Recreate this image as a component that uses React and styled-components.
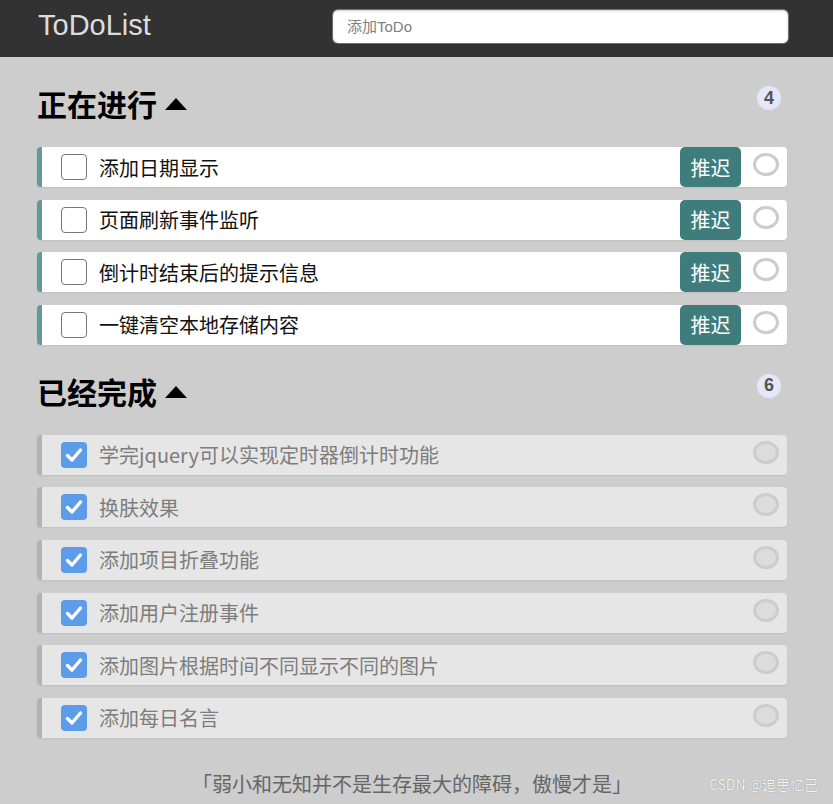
import React from "react";
import styled, { createGlobalStyle } from "styled-components";

const GlobalStyle = createGlobalStyle`
  html, body {
    margin: 0;
    padding: 0;
    background: #cdcdcd;
    font-family: "Liberation Sans", "Noto Sans CJK SC", sans-serif;
  }
`;

/* Header */
const Header = styled.header`
  height: 57px;
  background: #323232;
`;

const HeaderInner = styled.div`
  width: 750px;
  margin-left: 37px;
  height: 100%;
  display: flex;
  align-items: center;
  justify-content: space-between;
  padding-left: 1px;
`;

const Logo = styled.h1`
  margin: 0;
  font-size: 29px;
  font-weight: 400;
  color: #dddddd;
  margin-top: -7px;
`;

const AddInput = styled.input`
  width: 455px;
  height: 33px;
  box-sizing: border-box;
  margin-top: -5px;
  border: none;
  border-radius: 5px;
  padding: 0 14px;
  font-size: 15px;
  font-family: "Liberation Sans", "Noto Sans CJK SC", sans-serif;
  box-shadow: 0 1px 2px rgba(0, 0, 0, 0.2) inset, 0 0 0 1px rgba(255, 255, 255, 0.3);
  outline: none;
  &::placeholder {
    color: #808080;
  }
`;

/* Main */
const Main = styled.main`
  width: 750px;
  margin-left: 37px;
  padding-top: 28px;
`;

const SectionHead = styled.div`
  display: flex;
  align-items: center;
  justify-content: space-between;
  height: 36px;
  margin-bottom: 26px;
`;

const SectionTitle = styled.h2`
  margin: 0;
  font-size: 30px;
  font-weight: 700;
  color: #000;
  display: flex;
  align-items: center;
  gap: 8px;
  font-family: "Noto Sans CJK SC", sans-serif;
`;

const Triangle = styled.span`
  width: 0;
  height: 0;
  border-left: 11px solid transparent;
  border-right: 11px solid transparent;
  border-bottom: 12px solid #000;
  margin-top: 2px;
`;

const Count = styled.span`
  width: 24px;
  height: 24px;
  border-radius: 50%;
  background: #e6e6fa;
  color: #555;
  font-size: 18px;
  font-weight: 700;
  display: flex;
  align-items: center;
  justify-content: center;
  margin-right: 6px;
  margin-top: -10px;
`;

const List = styled.ol`
  list-style: none;
  margin: 0 0 28px;
  padding: 0;
  display: flex;
  flex-direction: column;
  gap: 12.6px;
`;

const Item = styled.li`
  height: 40px;
  display: flex;
  align-items: center;
  border-radius: 4px;
  border-left: 5px solid ${(p) => (p.$done ? "#b3b3b3" : "#629a9c")};
  background: ${(p) => (p.$done ? "#e6e6e6" : "#fff")};
  box-shadow: 0 1px 2px rgba(0, 0, 0, 0.07);
  padding-left: 19px;
  padding-right: 8px;
`;

const Box = styled.span`
  width: 26px;
  height: 26px;
  box-sizing: border-box;
  border-radius: 4px;
  flex-shrink: 0;
  display: flex;
  align-items: center;
  justify-content: center;
  border: ${(p) => (p.$checked ? "none" : "1px solid #767676")};
  background: ${(p) => (p.$checked ? "#5d9ce8" : "#fff")};
`;

const Text = styled.span`
  flex: 1;
  margin-left: 12px;
  font-size: 20px;
  color: ${(p) => (p.$done ? "#7d7d7d" : "#111")};
  font-family: "Noto Sans CJK SC", sans-serif;
  white-space: nowrap;
`;

const DelayButton = styled.button`
  height: 40px;
  width: 61px;
  border: none;
  border-radius: 5px;
  background: #3e7d7c;
  color: #fff;
  font-size: 20px;
  font-family: "Noto Sans CJK SC", sans-serif;
  padding: 0;
  margin-right: 12px;
`;

const Ring = styled.span`
  width: 26px;
  height: 23px;
  box-sizing: border-box;
  border-radius: 50%;
  border: 3px solid #cccccc;
  background: ${(p) => (p.$done ? "#dcdcdc" : "#fff")};
  align-self: flex-start;
  margin-top: 6px;
  flex-shrink: 0;
`;

const Footer = styled.footer`
  position: relative;
  text-align: center;
  font-size: 20px;
  color: #666;
  padding-top: 3px;
  font-family: "Noto Sans CJK SC", sans-serif;
  height: 40px;
`;

const Watermark = styled.span`
  position: absolute;
  right: -31px;
  top: 8px;
  font-size: 14px;
  color: #f5f5f5;
  text-shadow: 0 0 1px #777;
`;

const Check = () => (
  <svg width="18" height="16" viewBox="0 0 18 16">
    <path d="M2.5 8.5 L7 13 L15.5 3" fill="none" stroke="#fff" strokeWidth="3.4" strokeLinecap="round" strokeLinejoin="round" />
  </svg>
);

const doing = ["添加日期显示", "页面刷新事件监听", "倒计时结束后的提示信息", "一键清空本地存储内容"];
const done = [
  "学完jquery可以实现定时器倒计时功能",
  "换肤效果",
  "添加项目折叠功能",
  "添加用户注册事件",
  "添加图片根据时间不同显示不同的图片",
  "添加每日名言",
];

export default function App() {
  return (
    <>
      <GlobalStyle />
      <Header>
        <HeaderInner>
          <Logo>ToDoList</Logo>
          <AddInput placeholder="添加ToDo" />
        </HeaderInner>
      </Header>
      <Main>
        <SectionHead>
          <SectionTitle>
            正在进行 <Triangle />
          </SectionTitle>
          <Count>{doing.length}</Count>
        </SectionHead>
        <List>
          {doing.map((t) => (
            <Item key={t}>
              <Box />
              <Text>{t}</Text>
              <DelayButton>推迟</DelayButton>
              <Ring />
            </Item>
          ))}
        </List>
        <SectionHead>
          <SectionTitle>
            已经完成 <Triangle />
          </SectionTitle>
          <Count>{done.length}</Count>
        </SectionHead>
        <List>
          {done.map((t) => (
            <Item key={t} $done>
              <Box $checked>
                <Check />
              </Box>
              <Text $done>{t}</Text>
              <Ring $done />
            </Item>
          ))}
        </List>
        <Footer>
          「弱小和无知并不是生存最大的障碍，傲慢才是」
          <Watermark>CSDN @追思忆己</Watermark>
        </Footer>
      </Main>
    </>
  );
}
